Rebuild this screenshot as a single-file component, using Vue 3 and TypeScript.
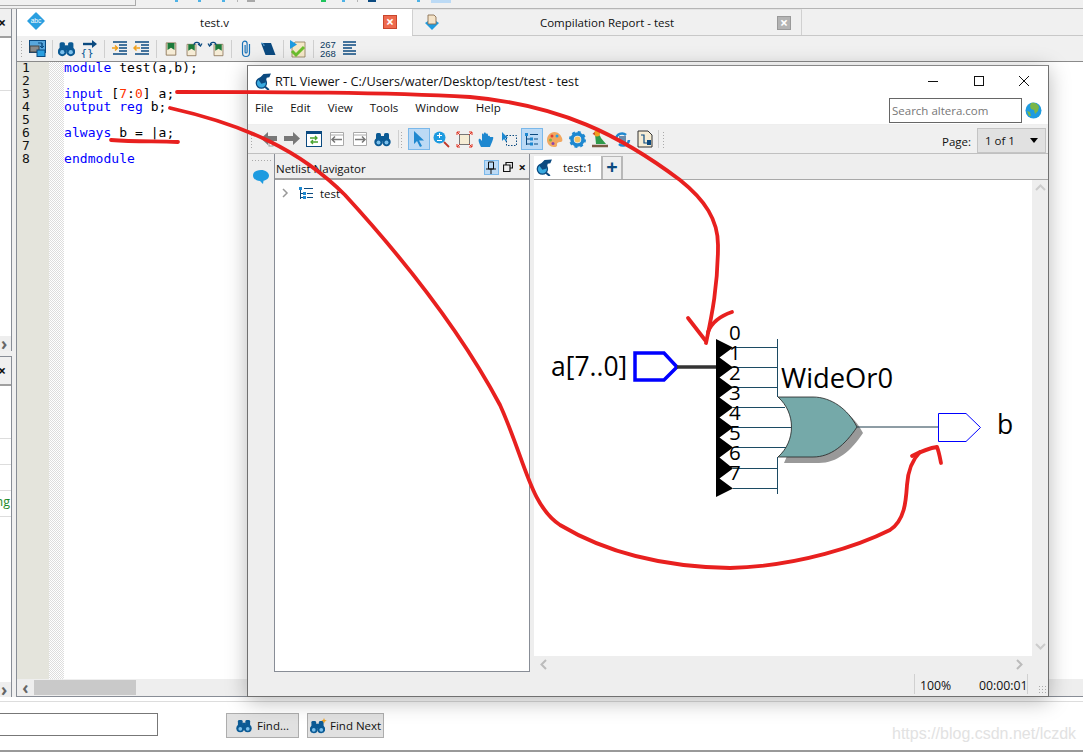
<script setup lang="ts">
const codeLines = [
  [['k', 'module'], ['', ' test(a,b);']],
  [],
  [['k', 'input'], ['', ' ['], ['n', '7'], ['', ':'], ['n', '0'], ['', '] a;']],
  [['k', 'output reg'], ['', ' b;']],
  [],
  [['k', 'always'], ['', ' b = |a;']],
  [],
  [['k', 'endmodule']],
]

const menus = ['File', 'Edit', 'View', 'Tools', 'Window', 'Help']

// toolbar above the capture, only its lower edge is visible
const stripBits = [
  { x: 175, w: 3, c: '#4db2e6' },
  { x: 198, w: 3, c: '#4db2e6' },
  { x: 222, w: 3, c: '#4db2e6' },
  { x: 237, w: 1, c: '#b5b5b5' },
  { x: 247, w: 8, c: '#a8a8a8' },
  { x: 321, w: 5, c: '#1fc45c' },
  { x: 342, w: 3, c: '#4db2e6' },
  { x: 357, w: 1, c: '#b5b5b5' },
  { x: 368, w: 8, c: '#0b4a80' },
  { x: 417, w: 3, c: '#4db2e6' },
  { x: 431, w: 20, c: '#bcdaf5' },
]
const stripGaps = stripBits.map((b, i) => {
  const prev = i ? stripBits[i - 1].x + stripBits[i - 1].w : 136
  return { ...b, gap: b.x - prev }
})

const bitPorts = ['0', '1', '2', '3', '4', '5', '6', '7']
const bitY = [347.5, 367.5, 387.5, 407.5, 427.5, 447.5, 468.5, 488.5]
const wireEnd = [777, 777, 777, 785, 791, 786, 777, 777]

// sawtooth bus ripper on the left of the gate
const ripper = (() => {
  let pts = '716,339 '
  bitY.forEach((y, i) => {
    pts += `733,${y} `
    if (i < bitY.length - 1) pts += `719.5,${y + 10} `
  })
  return pts + '716,497'
})()
</script>

<template>
  <div class="page">
    <svg class="defs" width="0" height="0">
      <symbol id="binoc" viewBox="0 0 16 16">
        <rect x="1.500" y="2" width="5" height="8" rx="1.500" fill="#0b5a94" />
        <rect x="9.500" y="2" width="5" height="8" rx="1.500" fill="#0b5a94" />
        <rect x="6" y="5" width="4" height="5" fill="#0b5a94" />
        <circle cx="4" cy="11" r="4.200" fill="#0b5a94" />
        <circle cx="12" cy="11" r="4.200" fill="#0b5a94" />
        <circle cx="4" cy="11.500" r="2" fill="#7cc0ec" />
        <circle cx="12" cy="11.500" r="2" fill="#7cc0ec" />
      </symbol>
      <symbol id="page" viewBox="0 0 16 16">
        <path d="M2.500 1h11v14h-11z" fill="#f6ecd6" stroke="#8a7356" stroke-width="1" />
        <path d="M4 1h8v8L8 6.500 4 9z" fill="#1c7a3a" />
      </symbol>
      <symbol id="viewer" viewBox="0 0 16 16">
        <circle cx="6" cy="9.500" r="4.800" fill="#38a9df" stroke="#0b4a80" stroke-width="1.200" />
        <path d="M9.500 13l3.500 3" stroke="#0b4a80" stroke-width="2" />
        <path d="M3 6 8 1l7-.5-1.500 3.500-2.500.5L10 9 6 10z" fill="#0b4a80" />
      </symbol>
    </svg>

    <div class="top-strip">
      <div class="top-left"></div>
      <i
        v-for="b in stripGaps"
        :key="b.x"
        class="top-bit"
        :style="{ width: b.w + 'px', marginLeft: b.gap + 'px', background: b.c }"
      ></i>
    </div>

    <div class="workspace">
      <aside class="dock">
        <div class="dock-panel dock-top">
          <div class="dock-head"><span class="dock-x">×</span></div>
          <div class="dock-row"></div>
          <div class="dock-fill"></div>
          <div class="dock-scroll"><span class="chev">›</span></div>
        </div>
        <div class="dock-panel dock-bottom">
          <div class="dock-head"><span class="dock-x">×</span></div>
          <div class="msg-row"></div>
          <div class="msg-row"></div>
          <div class="msg-row"></div>
          <div class="msg-row"><span class="msg-text">ng</span></div>
          <div class="dock-fill"></div>
          <div class="dock-scroll"><span class="chev">›</span></div>
        </div>
      </aside>

      <section class="editor">
        <div class="tabs">
          <div class="tab tab-on">
            <svg class="tab-icon" width="18" height="18" viewBox="0 0 18 18">
              <path d="M9 1 17 9 9 17 1 9z" fill="#2a9fe0" stroke="#2a9fe0" stroke-width="1.500" stroke-linejoin="round" />
              <text x="9" y="11" text-anchor="middle" font-size="6.500" fill="#fff" font-family="Liberation Sans">abc</text>
            </svg>
            <span class="tab-label">test.v</span>
            <span class="tab-close tab-close-red">×</span>
          </div>
          <div class="tab tab-off">
            <svg class="tab-icon" width="18" height="20" viewBox="0 0 18 20">
              <path d="M2 10 9 17l7-7-3-2H5z" fill="#1e9be0" />
              <path d="M5 2h6l2 2v7H5z" fill="#f4e3c8" stroke="#8a6f52" stroke-width=".9" />
            </svg>
            <span class="tab-label">Compilation Report - test</span>
            <span class="tab-close tab-close-grey">×</span>
          </div>
        </div>

        <div class="toolbar edit-tools">
          <span class="grip"></span>
          <span class="tool">
            <svg width="17" height="17" viewBox="0 0 17 17">
              <rect x=".5" y=".5" width="16" height="12" fill="#58a6dc" stroke="#0b4a80" />
              <path d="M9 3h4v4M13 3v5M11 6l2 2 2-2" fill="none" stroke="#0b4a80" />
              <rect x="1" y="6" width="9" height="6" fill="#8a8a8a" stroke="#444" />
              <rect x="8" y="10" width="8" height="6.500" fill="#2a9fe0" stroke="#0b4a80" />
            </svg>
          </span>
          <span class="sep"></span>
          <span class="tool"><svg width="17" height="17"><use href="#binoc" /></svg></span>
          <span class="tool">
            <svg width="17" height="18" viewBox="0 0 17 18">
              <path d="M2 4h10" stroke="#0b4a80" stroke-width="2.400" />
              <path d="M11 0v8l5-4z" fill="#0b4a80" />
              <text x="6" y="16.500" font-size="11" text-anchor="middle" fill="#0b5a94" font-family="DejaVu Sans Mono">{}</text>
            </svg>
          </span>
          <span class="sep"></span>
          <span class="tool">
            <svg width="17" height="17" viewBox="0 0 17 17">
              <path d="M2 2h14M8 5h8M8 8h8M8 11h8M2 14h14" stroke="#0b4a80" stroke-width="1.500" />
              <path d="M1 8h5M4 5.500 6.500 8 4 10.500" stroke="#f0a01c" stroke-width="1.500" fill="none" />
            </svg>
          </span>
          <span class="tool">
            <svg width="17" height="17" viewBox="0 0 17 17">
              <path d="M2 2h14M8 5h8M8 8h8M8 11h8M2 14h14" stroke="#0b4a80" stroke-width="1.500" />
              <path d="M7 8H1M3.500 5.500 1 8l2.500 2.500" stroke="#f0a01c" stroke-width="1.500" fill="none" />
            </svg>
          </span>
          <span class="sep"></span>
          <span class="tool"><svg width="14" height="16"><use href="#page" /></svg></span>
          <span class="tool">
            <svg width="18" height="17" viewBox="0 0 18 17">
              <use href="#page" x="0" y="3" width="13" height="14" />
              <path d="M9 5c0-3 5-4 6 0" stroke="#0b4a80" fill="none" stroke-width="1.200" />
              <path d="M13 4l2.500 2L17 3.500" stroke="#0b4a80" fill="none" stroke-width="1.200" />
            </svg>
          </span>
          <span class="tool">
            <svg width="18" height="17" viewBox="0 0 18 17">
              <use href="#page" x="5" y="3" width="13" height="14" />
              <path d="M9 5C9 2 4 1 3 5" stroke="#0b4a80" fill="none" stroke-width="1.200" />
              <path d="M5 4 2.500 6 1 3.500" stroke="#0b4a80" fill="none" stroke-width="1.200" />
            </svg>
          </span>
          <span class="sep"></span>
          <span class="tool">
            <svg width="12" height="18" viewBox="0 0 12 18">
              <path d="M9.500 4v9a3.500 3.500 0 0 1-7 0V3.500a2.300 2.300 0 0 1 4.600 0V12a1 1 0 0 1-2 0V5" fill="none" stroke="#1a73b8" stroke-width="1.200" />
            </svg>
          </span>
          <span class="tool">
            <svg width="17" height="16" viewBox="0 0 17 16">
              <path d="M1 2h10l4.500 12H5.500z" fill="#0b4a80" />
              <path d="M1 2c2 0 3 1 3 3" fill="none" stroke="#6db7e8" />
            </svg>
          </span>
          <span class="sep"></span>
          <span class="tool">
            <svg width="18" height="18" viewBox="0 0 18 18">
              <path d="M6 2h10v15H3V6z" fill="#f6e9c9" stroke="#8a7a55" stroke-width=".8" />
              <path d="M1 0l7 4.500L1 9z" fill="#1e9be0" />
              <path d="M3 11l4 4 8-8" fill="none" stroke="#6cbf2e" stroke-width="3" />
            </svg>
          </span>
          <span class="sep"></span>
          <span class="tool lines-num">267<br />268</span>
          <span class="tool">
            <svg width="14" height="16" viewBox="0 0 14 16">
              <path d="M0 1h13M0 4h13M0 7h9M0 10h13M0 13h13" stroke="#0b4a80" stroke-width="1.400" />
            </svg>
          </span>
        </div>

        <div class="code-area">
          <div class="gutter">
            <span v-for="n in 8" :key="n">{{ n }}</span>
          </div>
          <div class="fold"></div>
          <pre class="code"><template v-for="(line, i) in codeLines" :key="i"><span v-for="(part, j) in line" :key="j" :class="part[0]">{{ part[1] }}</span>{{ '\n' }}</template></pre>
        </div>

        <div class="hscroll">
          <span class="hs-left">‹</span>
          <span class="hs-thumb"></span>
        </div>
      </section>
    </div>

    <footer class="find-bar">
      <input class="find-input" type="text" />
      <button class="find-btn btn-find">
        <svg width="16" height="15"><use href="#binoc" /></svg>Find...
      </button>
      <button class="find-btn btn-next">
        <svg width="17" height="16" viewBox="0 0 17 16">
          <use href="#binoc" x="0" y="1" width="15" height="15" />
          <path d="M14 0l.8 2 2 .6-2 .8-.8 2-.8-2-2-.8 2-.6z" fill="#f0a01c" />
        </svg>Find Next
      </button>
    </footer>

    <!-- floating RTL Viewer window -->
    <div class="rtl-window">
      <div class="rtl-title">
        <svg class="title-icon" width="17" height="17"><use href="#viewer" /></svg>
        <span class="title-text">RTL Viewer - C:/Users/water/Desktop/test/test - test</span>
        <div class="win-btns">
          <svg width="12" height="12" viewBox="0 0 12 12"><path d="M1 6.500h10" stroke="#111" /></svg>
          <svg width="12" height="12" viewBox="0 0 12 12"><rect x="1.500" y="1.500" width="9" height="9" fill="none" stroke="#111" /></svg>
          <svg width="12" height="12" viewBox="0 0 12 12"><path d="M1 1l10 10M11 1 1 11" stroke="#111" /></svg>
        </div>
      </div>

      <div class="rtl-menu">
        <span v-for="m in menus" :key="m" class="menu-item">{{ m }}</span>
        <div class="search-wrap">
          <input class="search" type="text" placeholder="Search altera.com" />
          <svg width="17" height="17" viewBox="0 0 17 17">
            <circle cx="8.500" cy="8.500" r="8" fill="#1e9be0" />
            <path d="M6 1c4-1 7 1 8 4l-1 4-3 3-1-4-3-1-1-3z" fill="#7ab648" />
            <path d="M2 9l3 1 1 4-2 0z" fill="#7ab648" />
          </svg>
        </div>
      </div>

      <div class="toolbar rtl-tools">
        <span class="grip"></span>
        <span class="tool rt">
          <svg width="18" height="16" viewBox="0 0 18 16">
            <path d="M8 1v4h9v5H8v4L1 7.500z" fill="#777" />
            <rect x="9" y="11" width="4" height="4" fill="#fff" stroke="#999" />
          </svg>
        </span>
        <span class="tool rt">
          <svg width="18" height="16" viewBox="0 0 18 16"><path d="M10 1v4H1v5h9v4l7-6.500z" fill="#777" /></svg>
        </span>
        <span class="tool rt">
          <svg width="16" height="16" viewBox="0 0 16 16">
            <rect x=".5" y=".5" width="15" height="15" fill="#fff" stroke="#0b4a80" />
            <path d="M0 0h16v3H0z" fill="#0b4a80" />
            <path d="M4 7h7M9 5l2 2-2 2M12 11H5M7 9l-2 2 2 2" fill="none" stroke="#4aa52e" stroke-width="1.300" />
          </svg>
        </span>
        <span class="tool rt">
          <svg width="16" height="16" viewBox="0 0 16 16">
            <path d="M1.500 1.500h13v13h-13zM1.500 4h13" fill="#fff" stroke="#aaa" />
            <path d="M13 8.500H3M6 5.500l-3 3 3 3" fill="none" stroke="#777" stroke-width="1.500" />
          </svg>
        </span>
        <span class="tool rt">
          <svg width="16" height="16" viewBox="0 0 16 16">
            <path d="M1.500 1.500h13v13h-13zM1.500 4h13" fill="#fff" stroke="#aaa" />
            <path d="M3 8.500h10M10 5.500l3 3-3 3" fill="none" stroke="#777" stroke-width="1.500" />
          </svg>
        </span>
        <span class="tool rt"><svg width="17" height="16"><use href="#binoc" /></svg></span>
        <span class="sep rt-sep"></span>
        <span class="grip"></span>
        <span class="tool rt active">
          <svg width="14" height="18" viewBox="0 0 14 18"><path d="M2 1v13l3-3 3 6 2-1-3-5.500h5z" fill="#1e88d0" /></svg>
        </span>
        <span class="tool rt">
          <svg width="17" height="17" viewBox="0 0 17 17">
            <circle cx="6.500" cy="6.500" r="6" fill="#1e9be0" />
            <path d="M4 4.500h5M6.500 2v5M4 9.500h5" stroke="#fff" />
            <path d="M11 11l5 5" stroke="#c0392b" stroke-width="1.800" />
          </svg>
        </span>
        <span class="tool rt">
          <svg width="17" height="17" viewBox="0 0 17 17">
            <rect x="3.500" y="3.500" width="10" height="10" fill="#f6edd5" stroke="#777" />
            <path d="M1 4V1h3M13 1h3v3M16 13v3h-3M4 16H1v-3M1 1l3 3M16 1l-3 3M16 16l-3-3M1 16l3-3" fill="none" stroke="#e03020" />
          </svg>
        </span>
        <span class="tool rt">
          <svg width="17" height="17" viewBox="0 0 17 17">
            <path d="M3 16C1 12 0 9 1 8s2 1 3 2l0-7c1-1 2 0 2 1V2c1-1 2 0 2 1v0c1-1 2 0 2 1v1c1-.5 2 0 2 1l3 0c1 1-1 5-3 10z" fill="#1e88d0" />
          </svg>
        </span>
        <span class="tool rt">
          <svg width="17" height="17" viewBox="0 0 17 17">
            <path d="M1 1v9l2-2 2 3 1-1-2-3h3z" fill="#1e88d0" />
            <rect x="5.500" y="4.500" width="10" height="10" fill="none" stroke="#0b4a80" stroke-dasharray="1.500 1.500" />
          </svg>
        </span>
        <span class="tool rt active">
          <svg width="15" height="15" viewBox="0 0 15 15">
            <rect x="1" y="1" width="3" height="3" fill="#1e88d0" />
            <path d="M2.500 4v9M2.500 7H6M2.500 12H6" stroke="#0b4a80" />
            <rect x="6" y="5.500" width="3" height="3" fill="#1e88d0" />
            <rect x="6" y="10.500" width="3" height="3" fill="#1e88d0" />
            <path d="M6 2.500h8M10 7h4M10 12h4" stroke="#0b4a80" />
          </svg>
        </span>
        <span class="tool rt">
          <svg width="17" height="17" viewBox="0 0 17 17">
            <path d="M8.500 1C4 1 1 5 1 9s3 7 7 7 3-2 3-3 1-2 3-2 3-1 2-4-4-6-7.500-6z" fill="#f2a860" />
            <circle cx="6" cy="5" r="1.500" fill="#e04030" />
            <circle cx="11" cy="5" r="1.500" fill="#2a9fe0" />
            <circle cx="4.500" cy="9" r="1.500" fill="#7ab648" />
            <circle cx="7" cy="12.500" r="1.500" fill="#8e44ad" />
          </svg>
        </span>
        <span class="tool rt">
          <svg width="17" height="17" viewBox="0 0 17 17">
            <circle cx="8.500" cy="8.500" r="5.500" fill="none" stroke="#1e88d0" stroke-width="3.500" />
            <circle cx="8.500" cy="8.500" r="7.500" fill="none" stroke="#1e88d0" stroke-width="2" stroke-dasharray="3 2.900" />
            <circle cx="8.500" cy="8.500" r="3" fill="#f4c060" />
          </svg>
        </span>
        <span class="tool rt">
          <svg width="18" height="18" viewBox="0 0 18 18">
            <path d="M1 16h16" stroke="#7a5a44" stroke-width="2.500" />
            <path d="M4 4c3-1 5 1 6 4l5 6H5z" fill="#2e9a4a" />
            <circle cx="6" cy="3.500" r="3" fill="#f0a020" />
            <path d="M3.500 2 1.500 4 4 5z" fill="#c0392b" />
          </svg>
        </span>
        <span class="tool rt">
          <svg width="17" height="17" viewBox="0 0 17 17">
            <path d="M2 8a6 6 0 0 1 10-4M15 9a6 6 0 0 1-10 4" fill="none" stroke="#1e88d0" stroke-width="2.500" />
            <rect x="5" y="5" width="7" height="7" fill="#0b4a80" opacity=".6" />
          </svg>
        </span>
        <span class="tool rt">
          <svg width="16" height="18" viewBox="0 0 16 18">
            <path d="M1 1h10l4 4v12H1z" fill="#f6edd5" stroke="#333" />
            <path d="M4 5h3v8h6" fill="none" stroke="#0b4a80" stroke-width="1.200" />
            <rect x="10" y="10" width="4" height="5" fill="#0b4a80" />
          </svg>
        </span>
        <span class="sep page-sep"></span>
        <span class="grip"></span>
        <span class="page-label">Page:</span>
        <div class="page-combo"><span>1 of 1</span><i class="caret"></i></div>
      </div>

      <div class="rtl-body">
        <div class="side-bar">
          <span class="side-grip"></span>
          <svg width="16" height="14" viewBox="0 0 16 14">
            <path d="M8 0C3.500 0 0 2.200 0 5.500S3.500 11 7 11l3 3 .5-3.300C13.500 10 16 8.500 16 5.500S12.500 0 8 0z" fill="#1e9be0" />
          </svg>
        </div>
        <div class="nav-pane">
          <div class="nav-head">
            <span class="nav-title">Netlist Navigator</span>
            <div class="nav-btns">
              <span class="pin">
                <svg width="10" height="13" viewBox="0 0 10 13"><path d="M2.500 1h5v7h-5zM0 8h10M5 8v5" fill="none" stroke="#111" /></svg>
              </span>
              <svg width="10" height="10" viewBox="0 0 10 10"><path d="M3 2.500V.5h6.500V6H7.500M.5 3h6.500v6.500H.5z" fill="none" stroke="#111" stroke-width="1.200" /></svg>
              <span class="nav-x">×</span>
            </div>
          </div>
          <div class="nav-tree">
            <svg width="7" height="10" viewBox="0 0 7 10"><path d="M1 1l4 4-4 4" fill="none" stroke="#999" stroke-width="1.500" /></svg>
            <svg class="tree-icon" width="14" height="13" viewBox="0 0 14 13">
              <rect x="0" y="0" width="3" height="3" fill="#1e88d0" />
              <path d="M1.500 3v9M1.500 6.500H4M1.500 10.500H4" stroke="#0b4a80" />
              <rect x="4" y="5" width="3" height="3" fill="#1e88d0" />
              <rect x="4" y="9" width="3" height="3" fill="#1e88d0" />
              <path d="M5 1.500h9M8 6.500h6M8 10.500h6" stroke="#0b4a80" />
            </svg>
            <span class="tree-label">test</span>
          </div>
        </div>
        <div class="view-pane">
          <div class="view-tabs">
            <div class="view-tab">
              <svg width="17" height="17"><use href="#viewer" /></svg>
              <span>test:1</span>
            </div>
            <div class="view-plus">+</div>
          </div>
          <div class="view-main">
            <div class="canvas">
              <svg class="schematic" viewBox="534 180 498 476" width="498" height="476">
                <polygon points="635,353 664,353 677,367 664,380 635,380" fill="#fff" stroke="#0000ff" stroke-width="3.500" />
                <path d="M677 367h40" stroke="#333" stroke-width="3.500" />
                <path
                  v-for="(y, i) in bitY"
                  :key="y"
                  :d="`M733 ${y}H${wireEnd[i]}`"
                  stroke="#1c4b63"
                />
                <path d="M777.500 339v58M777.500 457v37" stroke="#1c4b63" />
                <polygon :points="ripper" fill="#000" />
                <path d="M784 403h35c18 0 35 12 44 30-12 18-26 30-44 30h-35c9-18 13-42 0-60z" fill="#999" />
                <path d="M778 397h35c18 0 35 12 44 30-12 18-26 30-44 30h-35c18-16 18-44 0-60z" fill="#75a9a9" stroke="#222" stroke-width=".8" />
                <path d="M857 427h81" stroke="#1c3b4a" />
                <polygon points="938.500,413.500 966,413.500 980.500,427.500 966,441.500 938.500,441.500" fill="#fff" stroke="#0000ff" />
                <text x="551" y="376" class="sch big">a[7..0]</text>
                <text x="781" y="388" class="sch big gate-name">WideOr0</text>
                <text x="997" y="434" class="sch big">b</text>
                <text
                  v-for="(p, i) in bitPorts"
                  :key="p"
                  :x="729"
                  :y="339.500 + i * 20.100"
                  class="sch small"
                >{{ p }}</text>
              </svg>
            </div>
            <div class="vscroll">
              <svg width="11" height="7" viewBox="0 0 11 7"><path d="M1 6l4.500-4.500L10 6" fill="none" stroke="#ccc" stroke-width="2" /></svg>
              <svg width="11" height="7" viewBox="0 0 11 7"><path d="M1 1l4.500 4.500L10 1" fill="none" stroke="#ccc" stroke-width="2" /></svg>
            </div>
          </div>
          <div class="view-hscroll">
            <svg width="7" height="11" viewBox="0 0 7 11"><path d="M6 1 1.500 5.500 6 10" fill="none" stroke="#bbb" stroke-width="2" /></svg>
            <svg width="7" height="11" viewBox="0 0 7 11"><path d="M1 1l4.500 4.500L1 10" fill="none" stroke="#bbb" stroke-width="2" /></svg>
          </div>
        </div>
      </div>

      <div class="rtl-status">
        <span class="st-cell st-zoom">100%</span>
        <span class="st-cell st-time">00:00:01</span>
        <span class="st-grip"></span>
      </div>
    </div>

    <!-- hand drawn annotations on top of the capture -->
    <svg class="ink" width="1083" height="752" viewBox="0 0 1083 752">
      <g fill="none" stroke="#e8201f" stroke-width="3.800" stroke-linecap="round" stroke-linejoin="round">
        <path d="M177 92C280 92 380 92 470 97 560 105 620 135 680 180 705 200 718 220 718 245 718 285 712 315 706 343" />
        <path d="M688 318 705 340M732 312C720 316 712 322 708 332" />
        <path d="M170 108C245 125 300 150 345 195 400 255 460 330 500 405 525 460 530 505 560 525 610 555 670 567 730 568 800 566 860 545 890 530 905 520 906 500 907 485 908 470 912 460 920 452" />
        <path d="M912 456C920 452 930 448 937 447 939 452 940 458 941 463" />
        <path d="M111 140C135 142 155 141 178 142" />
      </g>
      <text x="892" y="739" class="mark">https://blog.csdn.net/lczdk</text>
    </svg>
  </div>
</template>

<style>
body {
  margin: 0;
  overflow: hidden;
}
</style>

<style scoped>
.page {
  position: relative;
  width: 1083px;
  height: 752px;
  overflow: hidden;
  background: #fff;
  display: flex;
  flex-direction: column;
  font-family: "Open Sans", "Noto Sans", sans-serif;
  font-size: 11.5px;
  color: #111;
}
.defs {
  position: absolute;
}

/* top strip */
.top-strip {
  height: 8px;
  background: #f0f0f0;
  border-bottom: 1px solid #b5b5b5;
  display: flex;
  align-items: flex-start;
  flex: none;
  box-sizing: content-box;
}
.top-left {
  width: 135px;
  height: 5px;
  border-right: 1px solid #aaa;
  border-bottom: 1px solid #aaa;
  flex: none;
}
.top-bit {
  height: 2px;
  flex: none;
}
.top-bit:last-child {
  height: 3px;
}

.workspace {
  flex: none;
  height: 688px;
  display: flex;
  background: #f0f0f0;
}

/* left dock */
.dock {
  width: 12px;
  margin-right: 4px;
  flex: none;
  display: flex;
  flex-direction: column;
  gap: 5px;
}
.dock-panel {
  background: #fff;
  border-right: 1px solid #888d96;
  display: flex;
  flex-direction: column;
  overflow: hidden;
}
.dock-top {
  height: 342px;
}
.dock-bottom {
  flex: 1;
  border-top: 1px solid #888d96;
}
.dock-head {
  height: 27px;
  background: #f0f0f0;
  border-bottom: 2px solid #a0a0a0;
  flex: none;
  position: relative;
}
.dock-x {
  position: absolute;
  left: -2px;
  top: 4px;
  font-size: 14px;
  font-weight: 700;
}
.dock-row {
  height: 52px;
  border-bottom: 1px solid #ddd;
  flex: none;
}
.dock-fill {
  flex: 1;
}
.dock-scroll {
  height: 15px;
  background: #eee;
  flex: none;
  position: relative;
}
.chev {
  position: absolute;
  left: 1px;
  top: -4px;
  font-size: 17px;
  font-weight: 700;
  color: #666;
}
.msg-row {
  height: 26px;
  flex: none;
  border-bottom: 1px solid #ddd;
  position: relative;
  box-sizing: border-box;
}
.msg-text {
  position: absolute;
  right: 1px;
  top: 1px;
  color: #1c8a2a;
  font-size: 12.5px;
  line-height: 20px;
}
.dock-bottom .msg-row:nth-child(2) {
  height: 53px;
}

/* editor */
.editor {
  flex: 1;
  display: flex;
  flex-direction: column;
  min-width: 0;
  border-left: 1px solid #888d96;
}
.tabs {
  height: 26px;
  display: flex;
  align-items: stretch;
  flex: none;
  border-bottom: 1px solid #c8c8c8;
}
.tab {
  position: relative;
  display: flex;
  align-items: center;
  justify-content: center;
  box-sizing: border-box;
}
.tab-on {
  width: 395px;
  background: #fff;
  margin-bottom: -1px;
}
.tab-off {
  width: 390px;
  background: #f0f0f0;
  border-left: 1px solid #d0d0d0;
  border-right: 1px solid #d0d0d0;
  border-top: 1px solid #e4e4e4;
}
.tab-icon {
  position: absolute;
  left: 10px;
  top: 3px;
}
.tab-label {
  font-size: 11.5px;
}
.tab-close {
  position: absolute;
  top: 6px;
  width: 14px;
  height: 14px;
  line-height: 12px;
  text-align: center;
  font-size: 14px;
  font-weight: 700;
  color: #fff;
  box-sizing: border-box;
}
.tab-close-red {
  left: 366px;
  background: #ee6a4e;
  border: 1px solid #c8452c;
}
.tab-close-grey {
  left: 364px;
  background: #b3b3b3;
  border: 1px solid #999;
}

.toolbar {
  display: flex;
  align-items: center;
  flex: none;
}
.edit-tools {
  height: 25px;
  background: #f0f0f0;
  border-bottom: 1px solid #8a8a8a;
  padding-left: 3px;
}
.grip {
  width: 3px;
  height: 17px;
  flex: none;
  background-image: radial-gradient(#aaa 40%, transparent 45%);
  background-size: 3px 3px;
}
.tool {
  width: 22.6px;
  height: 24px;
  flex: none;
  display: flex;
  align-items: center;
  justify-content: center;
}
.edit-tools .grip {
  margin-right: 3px;
}
.sep {
  width: 1px;
  height: 18px;
  background: #cfcfcf;
  margin: 0 3px;
  flex: none;
}
.lines-num {
  font-size: 9.5px;
  line-height: 9px;
  text-align: center;
  color: #0b3a60;
  font-family: "Liberation Sans", sans-serif;
}

.code-area {
  flex: 1;
  min-height: 0;
  display: flex;
  background: #fff;
}
.gutter {
  width: 32px;
  flex: none;
  background: #e4e4dc;
  display: flex;
  flex-direction: column;
  padding: 0 0 0 5px;
  box-sizing: border-box;
  font-family: "DejaVu Sans Mono", monospace;
  font-size: 13px;
  line-height: 13px;
}
.gutter span:first-child {
  margin-top: -1px;
}
.fold {
  width: 15px;
  flex: none;
  background-image: repeating-conic-gradient(#ddd 0 25%, #fff 0 50%);
  background-size: 2px 2px;
}
.code {
  margin: -1px 0 0;
  padding: 0;
  font-family: "DejaVu Sans Mono", monospace;
  font-size: 13px;
  letter-spacing: 0.05px;
  line-height: 13px;
  color: #000;
}
.k {
  color: #0000ff;
}
.n {
  color: #ff3300;
}

.hscroll {
  height: 17px;
  background: #eee;
  border-bottom: 1px solid #888d96;
  flex: none;
  display: flex;
  align-items: center;
}
.hs-left {
  width: 17px;
  text-align: center;
  font-size: 17px;
  line-height: 14px;
  font-weight: 700;
  color: #666;
}
.hs-thumb {
  width: 102px;
  height: 15px;
  background: #c9c9c9;
}

/* bottom find bar */
.find-bar {
  flex: 1;
  display: flex;
  align-items: flex-start;
  background: #fff;
  box-shadow: inset 0 4px 0 #fff, inset 0 5px 0 #ddd;
  border-bottom: 2px solid #999;
  padding-top: 16px;
  box-sizing: border-box;
}
.find-input {
  width: 159px;
  margin-left: -1px;
  height: 23px;
  box-sizing: border-box;
  border: 1px solid #777;
  background: #fff;
  outline: none;
}
.find-btn {
  display: flex;
  align-items: center;
  gap: 5px;
  height: 25px;
  box-sizing: border-box;
  background: #e1e1e1;
  border: 1px solid #adadad;
  font: inherit;
  color: #111;
  padding: 0 0 0 9px;
}
.btn-find {
  width: 73px;
  margin-left: 68px;
}
.btn-next {
  width: 77px;
  margin-left: 8px;
  padding-left: 2px;
  gap: 3px;
  white-space: nowrap;
}

/* RTL window */
.rtl-window {
  position: absolute;
  left: 247px;
  top: 65px;
  width: 802px;
  height: 632px;
  box-sizing: border-box;
  border: 1px solid #707070;
  border-top-color: #888;
  background: #eee;
  box-shadow: 0 4px 20px rgba(0, 0, 0, 0.28);
  display: flex;
  flex-direction: column;
}
.rtl-title {
  height: 30px;
  background: #fff;
  display: flex;
  align-items: center;
  flex: none;
}
.title-icon {
  margin-left: 7px;
}
.title-text {
  margin-left: 3px;
  font-size: 12.7px;
}
.win-btns {
  margin-left: auto;
  width: 103px;
  margin-right: 18px;
  display: flex;
  justify-content: space-between;
}
.rtl-menu {
  height: 29px;
  background: #fff;
  display: flex;
  align-items: flex-start;
  flex: none;
  position: relative;
  border-bottom: 1px solid #eee;
  box-sizing: border-box;
  padding-left: 7px;
}
.menu-item {
  margin-right: 17px;
  line-height: 24px;
  font-size: 11.5px;
}
.search-wrap {
  margin-left: auto;
  margin-right: 6px;
  margin-top: 2px;
  display: flex;
  align-items: center;
  gap: 3px;
}
.search {
  width: 133px;
  height: 25px;
  box-sizing: border-box;
  border: 1px solid #666;
  padding: 0 2px;
  font: inherit;
  outline: none;
}
.search::placeholder {
  color: #777;
}
.rtl-tools {
  height: 29px;
  background: #f0f0f0;
  border-bottom: 1px solid #c0c0c0;
  padding-left: 2px;
  box-sizing: border-box;
}
.rtl-tools .grip {
  margin-right: 5px;
}
.rt {
  width: 22.6px;
  height: 22px;
  box-sizing: border-box;
}
.rt-sep {
  margin: 0 1px 0 4px;
}
.rt.active {
  background: #bcdaf5;
  border: 1px solid #7ab8ea;
}
.page-sep {
  margin: 0 3px 0 2px;
}
.page-label {
  margin-left: auto;
  margin-right: 6px;
  margin-top: 4px;
}
.page-combo {
  width: 69px;
  height: 25px;
  box-sizing: border-box;
  background: #e1e1e1;
  border: 1px solid #c4c4c4;
  margin-right: 2px;
  margin-top: 2px;
  display: flex;
  align-items: center;
  padding-left: 7px;
  position: relative;
}
.caret {
  position: absolute;
  right: 7px;
  top: 9px;
  border: 4px solid transparent;
  border-top: 5px solid #000;
}
.rtl-body {
  flex: 1;
  min-height: 0;
  display: flex;
}
.side-bar {
  width: 26px;
  flex: none;
  background: #eee;
  display: flex;
  flex-direction: column;
  align-items: center;
  gap: 8px;
  padding-top: 5px;
  box-sizing: border-box;
}
.side-grip {
  width: 20px;
  height: 3px;
  background-image: radial-gradient(#aaa 40%, transparent 45%);
  background-size: 3px 3px;
}
.nav-pane {
  width: 256px;
  flex: none;
  border: 1px solid #888d96;
  border-top: none;
  background: #fff;
  display: flex;
  flex-direction: column;
  box-sizing: border-box;
}
.nav-head {
  height: 26px;
  background: #eee;
  border-bottom: 2px solid #a0a0a0;
  flex: none;
  display: flex;
  align-items: center;
  padding-left: 1px;
  box-sizing: border-box;
  font-size: 11.5px;
}
.nav-title {
  margin-top: 4px;
}
.nav-btns {
  margin-left: auto;
  margin-right: 3px;
  margin-top: 2px;
  display: flex;
  align-items: center;
  gap: 4px;
}
.pin {
  width: 15px;
  height: 15px;
  background: #bcdaf5;
  border: 1px solid #7ab8ea;
  box-sizing: border-box;
  display: flex;
  align-items: center;
  justify-content: center;
}
.nav-x {
  font-size: 13px;
  line-height: 12px;
  font-weight: 700;
  margin-left: 2px;
}
.nav-tree {
  display: flex;
  align-items: center;
  padding: 6px 0 0 7px;
  height: 14px;
}
.tree-icon {
  margin-left: 10px;
}
.tree-label {
  margin-left: 7px;
}
.view-pane {
  flex: 1;
  min-width: 0;
  margin-left: 4px;
  display: flex;
  flex-direction: column;
}
.view-tabs {
  height: 26px;
  flex: none;
  display: flex;
  border-bottom: 1px solid #a8a8a8;
  margin-top: 0;
  padding-top: 2px;
  box-sizing: border-box;
}
.view-tab {
  width: 67px;
  background: #fff;
  display: flex;
  align-items: center;
  gap: 10px;
  padding-left: 2px;
  box-sizing: border-box;
}
.view-plus {
  width: 22px;
  background: #eee;
  border: 2px solid #b8b8b8;
  border-bottom: none;
  border-top: 1px solid #b8b8b8;
  box-sizing: border-box;
  text-align: center;
  color: #0b4a80;
  font-size: 20px;
  font-weight: 700;
  line-height: 20px;
}
.view-main {
  flex: 1;
  min-height: 0;
  display: flex;
}
.canvas {
  width: 498px;
  flex: none;
  background: #fff;
  position: relative;
  overflow: hidden;
}
.schematic {
  display: block;
}
.sch {
  font-family: "Open Sans", "Noto Sans", sans-serif;
  fill: #000;
}
.sch.big {
  font-size: 26.5px;
}
.sch.gate-name {
  font-size: 27.3px;
}
.sch.small {
  font-size: 20.5px;
}
.vscroll {
  flex: 1;
  display: flex;
  flex-direction: column;
  justify-content: space-between;
  align-items: center;
  padding: 4px 0 6px;
}
.view-hscroll {
  height: 16px;
  flex: none;
  display: flex;
  justify-content: space-between;
  align-items: center;
  padding: 0 25px 0 6px;
}
.rtl-status {
  height: 24px;
  flex: none;
  display: flex;
  align-items: center;
  font-size: 12.3px;
}
.st-cell {
  height: 20px;
  line-height: 24px;
  border-left: 1px solid #d0d0d0;
  box-sizing: border-box;
}
.st-zoom {
  margin-left: 666px;
  width: 114px;
  padding-left: 5px;
}
.st-time {
  border: none;
  white-space: nowrap;
  margin-left: -49px;
  width: 49px;
  text-align: right;
  padding-right: 1px;
  border-right: 1px solid #d0d0d0;
}
.st-grip {
  width: 9px;
  height: 8px;
  margin: 10px 0 0 10px;
  background-image: radial-gradient(#aaa 40%, transparent 45%);
  background-size: 3px 3px;
}

.ink {
  position: absolute;
  left: 0;
  top: 0;
  pointer-events: none;
}
.mark {
  font-family: "Liberation Sans", sans-serif;
  font-size: 16px;
  fill: #e2e2e2;
}
</style>
